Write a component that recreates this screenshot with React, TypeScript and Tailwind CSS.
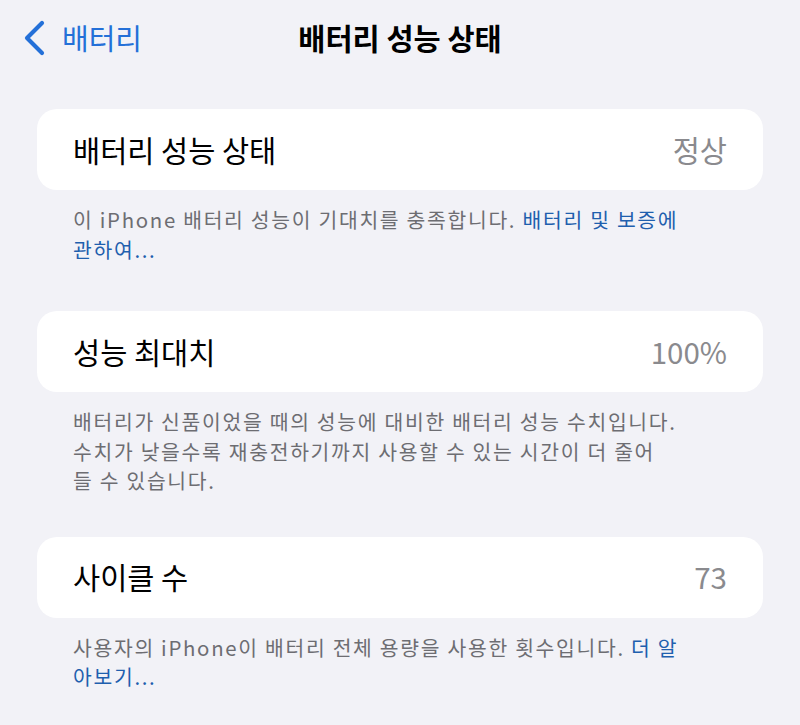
import React from "react";

const font = { fontFamily: '"Noto Sans CJK KR", "Noto Sans", sans-serif' };

function Row({ label, value }: { label: string; value: string }) {
  return (
    <div className="mx-[37px] h-[81px] rounded-[20px] bg-white flex items-center justify-between pl-[36px] pr-[36px]">
      <span className="text-[29.5px] text-black leading-none">{label}</span>
      <span className="text-[29.5px] text-[#8a8a8e] leading-none">{value}</span>
    </div>
  );
}

function Footer({ children }: { children: React.ReactNode }) {
  return (
    <div className="mx-[37px] pl-[36px] pr-[10px] pt-[15px] text-[20.4px] leading-[29.5px] tracking-[1.7px] text-[#6d6d72] whitespace-nowrap">
      {children}
    </div>
  );
}

export default function App() {
  return (
    <div className="w-[800px] h-[725px] bg-[#f2f2f7] overflow-hidden" style={font}>
      <div className="relative h-[75px] flex items-center">
        <div className="flex items-center pl-[22px] gap-[14px] text-[#2470d8]">
          <svg width="26" height="36" viewBox="0 0 26 36" fill="none">
            <path d="M20 3 L5 18 L20 33" stroke="#2470d8" strokeWidth="4.2" strokeLinecap="round" strokeLinejoin="round" />
          </svg>
          <span className="text-[29px] leading-none">배터리</span>
        </div>
        <div className="absolute inset-0 flex items-center justify-center pointer-events-none">
          <span className="text-[29.5px] font-bold text-black leading-none">배터리 성능 상태</span>
        </div>
      </div>

      <div className="mt-[34px]">
        <Row label="배터리 성능 상태" value="정상" />
        <Footer>
          <div>
            이 iPhone 배터리 성능이 기대치를 충족합니다. <span className="text-[#1f5fae]">배터리 및 보증에</span>
          </div>
          <div className="text-[#1f5fae]">관하여...</div>
        </Footer>
      </div>

      <div className="mt-[47px]">
        <Row label="성능 최대치" value="100%" />
        <Footer>
          <div>배터리가 신품이었을 때의 성능에 대비한 배터리 성능 수치입니다.</div>
          <div>수치가 낮을수록 재충전하기까지 사용할 수 있는 시간이 더 줄어</div>
          <div>들 수 있습니다.</div>
        </Footer>
      </div>

      <div className="mt-[41px]">
        <Row label="사이클 수" value="73" />
        <Footer>
          <div>
            사용자의 iPhone이 배터리 전체 용량을 사용한 횟수입니다. <span className="text-[#1f5fae]">더 알</span>
          </div>
          <div className="text-[#1f5fae]">아보기...</div>
        </Footer>
      </div>
    </div>
  );
}
